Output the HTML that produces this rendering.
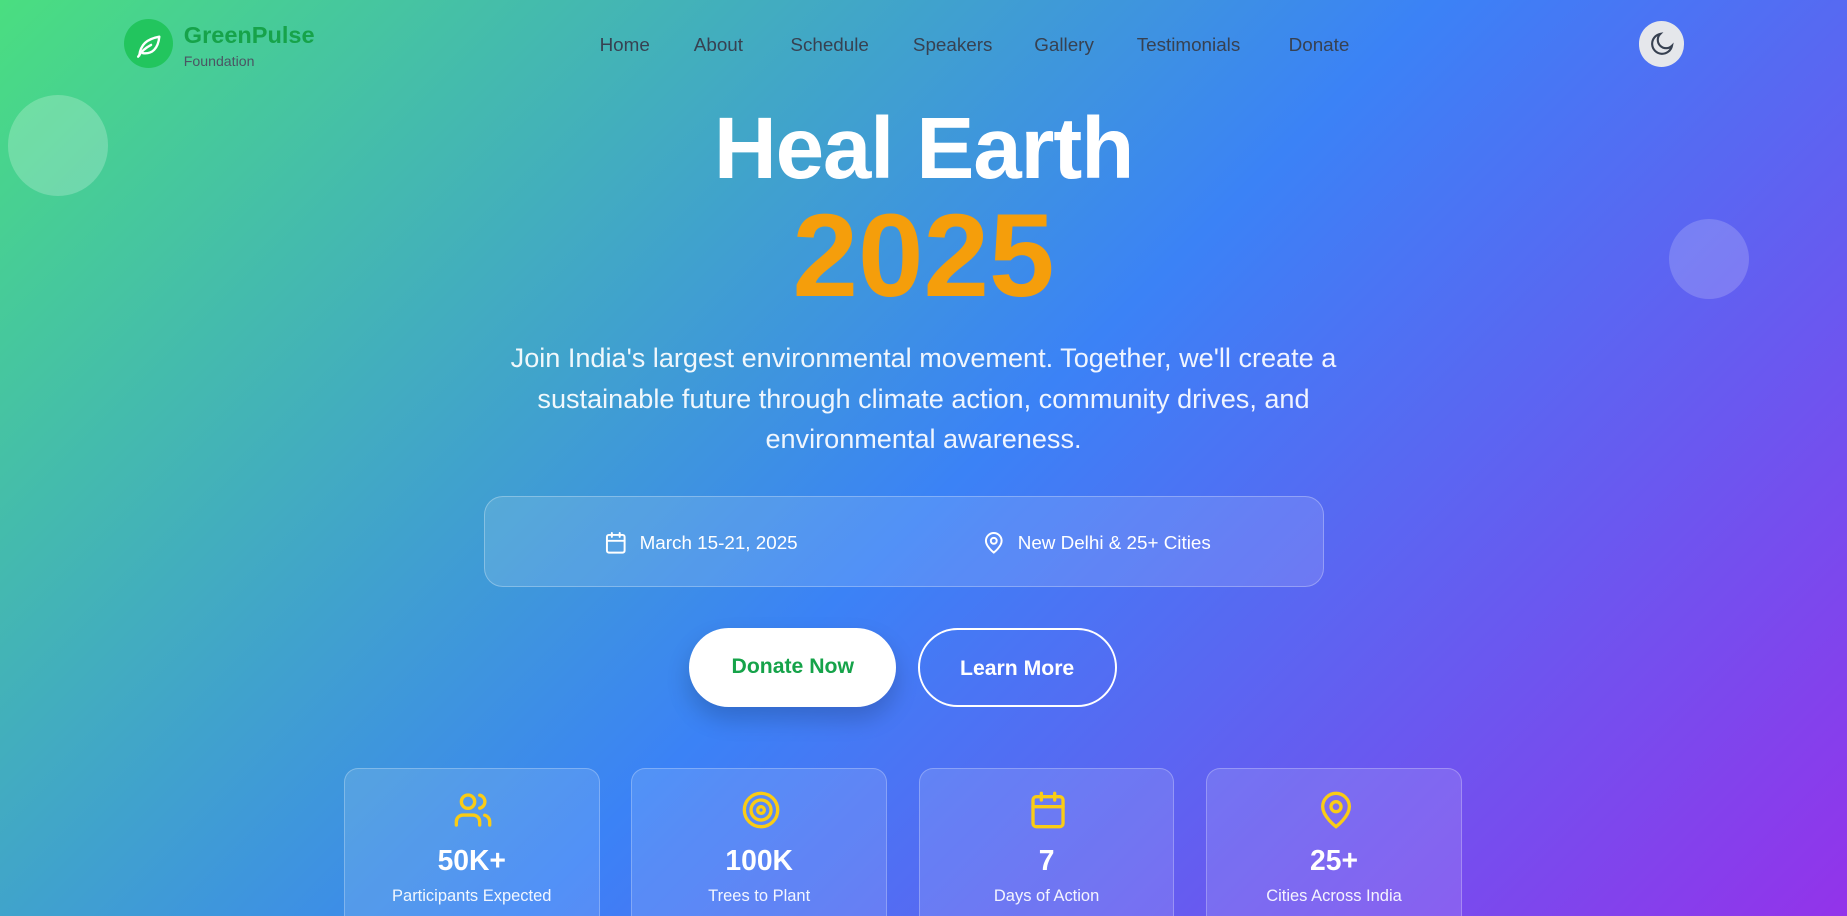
<!DOCTYPE html>
<html><head><meta charset="utf-8"><style>
html,body{margin:0;padding:0;overflow:hidden}
body{width:1847px;height:916px}
#w{zoom:1.17793;width:1568px;height:778px;position:relative;overflow:hidden;font-family:"Liberation Sans",sans-serif;
background:linear-gradient(135deg,#4ade80 0%,#3b82f6 52%,#9333ea 100%)}
.a{position:absolute}
.logo{left:105px;top:16px;width:42px;height:42px;border-radius:50%;background:#22c55e}
.nav a{position:absolute;top:29px;font-size:16px;font-weight:500;color:#374151;text-decoration:none;white-space:nowrap}
.c{text-align:center;left:0;width:1568px}
.card{top:652px;width:217px;height:140px;border-radius:12px;background:rgba(255,255,255,.12);border:1px solid rgba(255,255,255,.25);box-sizing:border-box;text-align:center;color:#fff}
.card svg{position:absolute;left:92px;top:18px}
.card .n{position:absolute;left:0;right:0;top:64px;font-size:24px;font-weight:bold}
.card .l{position:absolute;left:0;right:0;top:100px;font-size:14px;color:rgba(255,255,255,.92)}
</style></head><body><div id="w">
<div class="a" style="left:7px;top:81px;width:85px;height:85px;border-radius:50%;background:rgba(255,255,255,.22)"></div>
<div class="a" style="left:1417px;top:186px;width:68px;height:68px;border-radius:50%;background:rgba(255,255,255,.18)"></div>
<div class="a logo"><svg width="42" height="42" viewBox="0 0 42 42" fill="none" stroke="#fff" stroke-width="2" stroke-linecap="round" stroke-linejoin="round"><path d="M13 31c1-9 6-14 17-16-1 10-6 15-14 14"/><path d="M12 32c3-5 7-8 11-10"/></svg></div>
<div class="a" style="left:156px;top:19px;font-size:20px;font-weight:bold;color:#16a34a">GreenPulse</div>
<div class="a" style="left:156px;top:45px;font-size:12px;color:#4b5563">Foundation</div>
<div class="nav"><a style="left:509px">Home</a><a style="left:589px">About</a><a style="left:671px">Schedule</a><a style="left:775px">Speakers</a><a style="left:878px">Gallery</a><a style="left:965px">Testimonials</a><a style="left:1094px">Donate</a></div>
<div class="a" style="left:1391px;top:18px;width:39px;height:39px;border-radius:50%;background:#e5e7eb"><svg width="39" height="39" viewBox="0 0 39 39" fill="none" stroke="#374151" stroke-width="1.8" stroke-linecap="round"><path d="M18 11a8.5 8.5 0 1 0 10 10 6.5 6.5 0 0 1-10-10z"/></svg></div>
<div class="a c" style="top:87px;font-size:74px;font-weight:bold;color:#fff;line-height:80px;letter-spacing:-1px">Heal Earth</div>
<div class="a c" style="top:167px;font-size:100px;font-weight:bold;color:#f59e0b;line-height:100px">2025</div>
<div class="a c" style="top:287px;font-size:23px;line-height:34.5px;color:rgba(255,255,255,.92)"><div style="width:740px;margin:0 auto">Join India's largest environmental movement. Together, we'll create a sustainable future through climate action, community drives, and environmental awareness.</div></div>
<div class="a" style="left:411px;top:421px;width:713px;height:77px;border-radius:16px;background:rgba(255,255,255,.12);border:1px solid rgba(255,255,255,.28);box-sizing:border-box"></div>
<svg class="a" style="left:513px;top:451px" width="20" height="20" viewBox="0 0 24 24" fill="none" stroke="#fff" stroke-width="2" stroke-linecap="round"><rect x="3" y="4" width="18" height="18" rx="2"/><path d="M16 2v4M8 2v4M3 10h18"/></svg>
<div class="a" style="left:543px;top:452px;font-size:16px;color:#fff">March 15-21, 2025</div>
<svg class="a" style="left:834px;top:451px" width="20" height="20" viewBox="0 0 24 24" fill="none" stroke="#fff" stroke-width="2"><path d="M20 10c0 6-8 12-8 12s-8-6-8-12a8 8 0 0 1 16 0z"/><circle cx="12" cy="10" r="3"/></svg>
<div class="a" style="left:864px;top:452px;font-size:16px;color:#fff">New Delhi &amp; 25+ Cities</div>
<div class="a" style="left:585px;top:533px;width:176px;height:67px;border-radius:34px;background:#fff;box-shadow:0 10px 20px rgba(0,0,0,.18);color:#16a34a;font-size:18px;font-weight:600;text-align:center;line-height:66px">Donate Now</div>
<div class="a" style="left:779px;top:533px;width:169px;height:67px;border-radius:34px;border:2px solid #fff;box-sizing:border-box;color:#fff;font-size:18px;font-weight:bold;text-align:center;line-height:66px">Learn More</div>
<div class="a card" style="left:292px"><svg width="34" height="34" viewBox="0 0 24 24" fill="none" stroke="#facc15" stroke-width="2" stroke-linecap="round"><path d="M16 21v-2a4 4 0 0 0-4-4H6a4 4 0 0 0-4 4v2"/><circle cx="9" cy="7" r="4"/><path d="M22 21v-2a4 4 0 0 0-3-3.9M16 3.1a4 4 0 0 1 0 7.8"/></svg><div class="n">50K+</div><div class="l">Participants Expected</div></div>
<div class="a card" style="left:536px"><svg width="34" height="34" viewBox="0 0 24 24" fill="none" stroke="#facc15" stroke-width="2"><circle cx="12" cy="12" r="10"/><circle cx="12" cy="12" r="6"/><circle cx="12" cy="12" r="2"/></svg><div class="n">100K</div><div class="l">Trees to Plant</div></div>
<div class="a card" style="left:780px"><svg width="34" height="34" viewBox="0 0 24 24" fill="none" stroke="#facc15" stroke-width="2" stroke-linecap="round"><rect x="3" y="4" width="18" height="18" rx="2"/><path d="M16 2v4M8 2v4M3 10h18"/></svg><div class="n">7</div><div class="l">Days of Action</div></div>
<div class="a card" style="left:1024px"><svg width="34" height="34" viewBox="0 0 24 24" fill="none" stroke="#facc15" stroke-width="2"><path d="M20 10c0 6-8 12-8 12s-8-6-8-12a8 8 0 0 1 16 0z"/><circle cx="12" cy="10" r="3"/></svg><div class="n">25+</div><div class="l">Cities Across India</div></div>
</div></body></html>
